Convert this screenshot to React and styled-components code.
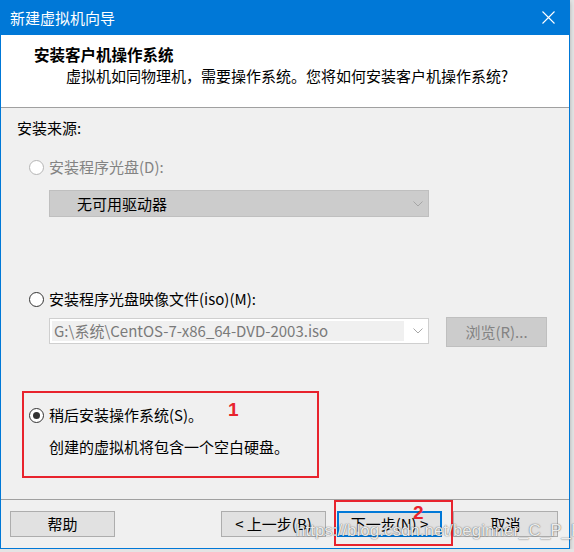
import React from 'react';
import styled, { createGlobalStyle } from 'styled-components';

const GlobalStyle = createGlobalStyle`
  * { box-sizing: border-box; }
  body {
    margin: 0;
    background: #e4e4e4;
    font-family: "Noto Sans CJK SC", "Noto Sans", sans-serif;
  }
`;

const Window = styled.div`
  width: 570px;
  height: 549px;
  border: 1px solid #0078d7;
  background: #f0f0f0;
  display: flex;
  flex-direction: column;
  box-shadow: 0 2px 4px rgba(0, 0, 0, 0.25);
  font-size: 15px;
  color: #000;
`;

const TitleBar = styled.div`
  height: 34px;
  background: #0078d7;
  color: #fff;
  display: flex;
  align-items: center;
  justify-content: space-between;
  padding: 0 14px 1px 9px;
  font-size: 15px;
`;

const Header = styled.div`
  height: 73px;
  background: #fff;
  border-bottom: 1px solid #a0a0a0;
  padding: 9px 0 0 33px;
  line-height: 20px;
`;

const HeaderTitle = styled.div`
  font-weight: bold;
  font-size: 15.5px;
`;

const HeaderText = styled.div`
  margin: 2px 0 0 32px;
`;

const Body = styled.div`
  flex: 1;
  display: flex;
  flex-direction: column;
  align-items: flex-start;
  padding-top: 10px;
  line-height: 20px;
`;

const SourceLabel = styled.div`
  margin-left: 16px;
`;

const OptionRow = styled.label`
  display: flex;
  align-items: center;
  gap: 5px;
  height: 20px;
  margin: ${p => p.$mt || 0}px 0 0 ${p => p.$ml || 0}px;
  color: ${p => (p.$disabled ? '#838383' : '#000')};
`;

const Radio = styled.span`
  width: 15px;
  height: 15px;
  border-radius: 50%;
  background: #fff;
  border: 1px solid ${p => (p.$disabled ? '#b5b5b5' : '#333')};
  display: flex;
  align-items: center;
  justify-content: center;

  &::after {
    content: '';
    width: 7px;
    height: 7px;
    border-radius: 50%;
    background: #333;
    display: ${p => (p.$checked ? 'block' : 'none')};
  }
`;

const Combo = styled.div`
  width: 380px;
  height: ${p => p.$h}px;
  margin: ${p => p.$mt || 0}px 0 0 ${p => p.$ml || 0}px;
  background: ${p => (p.$disabled ? '#cccccc' : '#fff')};
  border: 1px solid ${p => (p.$disabled ? '#bfbfbf' : '#cfcfcf')};
  display: flex;
  align-items: center;
  padding: 1px 5px 1px ${p => p.$pl || 1}px;
`;

const ComboText = styled.div`
  flex: 1;
  color: ${p => (p.$muted ? '#7a7a7a' : '#000')};
`;

const ComboField = styled.div`
  width: 353px;
  height: 20px;
  background: #f0f0f0;
  color: #7a7a7a;
  padding-left: 2px;
  line-height: 20px;
  white-space: nowrap;
  margin-right: 9px;
`;

const FileRow = styled.div`
  display: flex;
  align-items: flex-start;
  gap: 17px;
  margin: 8px 0 0 48px;
`;

const BrowseButton = styled.div`
  width: 101px;
  height: 30px;
  background: #cccccc;
  border: 1px solid #bfbfbf;
  color: #838383;
  display: flex;
  align-items: center;
  justify-content: center;
`;

const Callout = styled.div`
  position: relative;
  width: 297px;
  height: 87px;
  margin: 44px 0 0 21px;
  border: 2px solid #e8232d;
  padding: 12px 0 0 5px;
`;

const Mark = styled.span`
  position: absolute;
  left: ${p => p.$left}px;
  top: ${p => p.$top}px;
  color: #e8232d;
  font-family: "Liberation Sans", Arial, sans-serif;
  font-weight: bold;
  font-size: 19px;
  line-height: 19px;
`;

const Desc = styled.div`
  margin: 12px 0 0 20px;
`;

const Footer = styled.div`
  position: relative;
  height: 49px;
  border-top: 1px solid #a0a0a0;
  padding: 11px 11px 0 9px;
  display: flex;
  align-items: flex-start;
`;

const Spacer = styled.div`
  flex: 1;
`;

const NavGroup = styled.div`
  display: flex;
  gap: 11px;
`;

const Button = styled.div`
  position: relative;
  width: 105px;
  height: 26px;
  background: #e1e1e1;
  border: ${p => (p.$primary ? '2px solid #0078d7' : '1px solid #adadad')};
  display: flex;
  align-items: center;
  justify-content: center;
  line-height: 20px;
  white-space: nowrap;
`;

const FocusBox = styled.div`
  position: absolute;
  left: -5px;
  top: -13px;
  width: 119px;
  height: 46px;
  border: 2px solid #e8232d;
  pointer-events: none;
`;

const Watermark = styled.div`
  position: absolute;
  left: 295px;
  top: 21px;
  font-family: "Liberation Sans", Arial, sans-serif;
  font-size: 17px;
  line-height: 20px;
  color: rgba(255, 255, 255, 0.9);
  text-shadow: 0 0 1px rgba(0, 0, 0, 0.6), 0 0 2px rgba(0, 0, 0, 0.25);
  white-space: nowrap;
  pointer-events: none;
`;

const Chevron = () => (
  <svg width="10" height="6" viewBox="0 0 10 6">
    <polyline points="0.5,0.5 5,5 9.5,0.5" fill="none" stroke="#a6a6a6" strokeWidth="1" />
  </svg>
);

const CloseIcon = () => (
  <svg width="13" height="13" viewBox="0 0 13 13">
    <path d="M0.5 0.5 L12.5 12.5 M12.5 0.5 L0.5 12.5" stroke="#fff" strokeWidth="1.1" />
  </svg>
);

export default function App() {
  return (
    <>
      <GlobalStyle />
      <Window>
        <TitleBar>
          <span>新建虚拟机向导</span>
          <CloseIcon />
        </TitleBar>

        <Header>
          <HeaderTitle>安装客户机操作系统</HeaderTitle>
          <HeaderText>虚拟机如同物理机，需要操作系统。您将如何安装客户机操作系统?</HeaderText>
        </Header>

        <Body>
          <SourceLabel>安装来源:</SourceLabel>

          <OptionRow $mt={19} $ml={28} $disabled>
            <Radio $disabled />
            安装程序光盘(D):
          </OptionRow>
          <Combo $h={27} $mt={13} $ml={48} $pl={27} $disabled>
            <ComboText>无可用驱动器</ComboText>
            <Chevron />
          </Combo>

          <OptionRow $mt={72} $ml={28}>
            <Radio />
            安装程序光盘映像文件(iso)(M):
          </OptionRow>
          <FileRow>
            <Combo $h={26} $mt={1} $pl={2}>
              <ComboField>G:\系统\CentOS-7-x86_64-DVD-2003.iso</ComboField>
              <Chevron />
            </Combo>
            <BrowseButton>浏览(R)...</BrowseButton>
          </FileRow>

          <Callout>
            <OptionRow>
              <Radio $checked />
              稍后安装操作系统(S)。
            </OptionRow>
            <Desc>创建的虚拟机将包含一个空白硬盘。</Desc>
            <Mark $left={204} $top={7}>1</Mark>
          </Callout>
        </Body>

        <Footer>
          <Button>帮助</Button>
          <Spacer />
          <NavGroup>
            <Button>&lt; 上一步(B)</Button>
            <Button $primary>
              下一步(N) &gt;
              <FocusBox />
              <Mark $left={74} $top={-10}>2</Mark>
            </Button>
            <Button>取消</Button>
          </NavGroup>
          <Watermark>https://blog.csdn.net/beginner_C_P_P</Watermark>
        </Footer>
      </Window>
    </>
  );
}
